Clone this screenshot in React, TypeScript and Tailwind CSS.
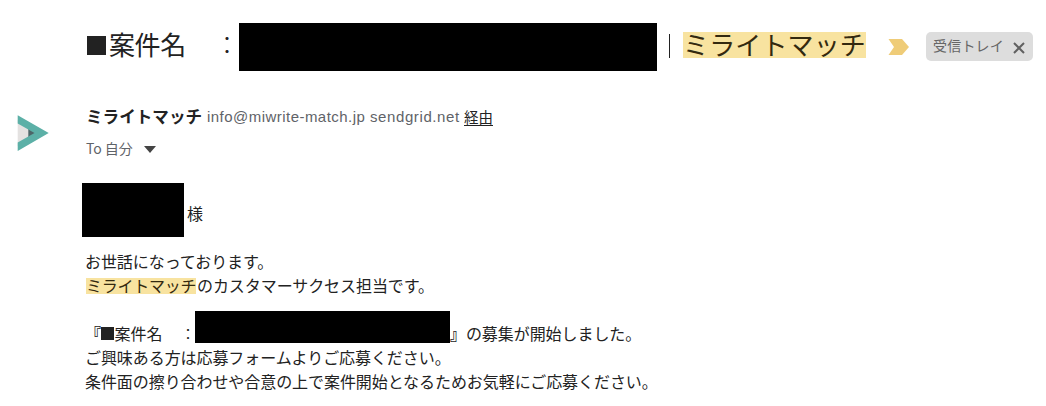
import type { ReactNode } from 'react';

const Mark = ({ children, className = '' }: { children: ReactNode; className?: string }) => (
  <span className={`bg-[#f8e3a0] text-[#33290f] ${className}`}>{children}</span>
);

const SenderLogo = () => (
  <svg width="32" height="38" viewBox="0 0 32 38" className="shrink-0">
    <path d="M.7 6 14 14v10L.7 32z" fill="#e4e2e1" />
    <path d="M11.3 13v12l8-6z" fill="#4d6668" />
    <path d="M.7 1.3 31.7 19 .7 37V28.5L17.5 19 .7 9.5z" fill="#5cb0a7" />
  </svg>
);

const ImportantMarker = () => (
  <svg width="21" height="16" viewBox="0 0 21 16" className="-mt-[2px] ml-[22px] shrink-0">
    <path d="M.5 0H14L21 8l-7 8H.5L6 8z" fill="#efcc78" />
  </svg>
);

const InboxLabel = () => (
  <div className="-mt-[3px] ml-[17px] flex h-[29px] w-[107px] shrink-0 items-center rounded-[5px] bg-[#dddddd] pl-[7px] text-[#666666]">
    <span className="w-[73px] pb-[3px] text-[14px] leading-5 tracking-[0.2px]">受信トレイ</span>
    <svg width="12" height="12" viewBox="0 0 12 12" className="ml-[7px] mt-[3px]">
      <path d="M1 1l10 10M11 1L1 11" stroke="#606060" strokeWidth="2" />
    </svg>
  </div>
);

const Subject = () => (
  <div className="flex h-[49px] items-center pl-[85px] text-[26px] leading-[26px] text-[#222222]">
    <div className="flex w-[154px] shrink-0 items-center">
      <span className="-mt-[4px] ml-[2px] mr-[3px] size-[19px] shrink-0 bg-[#222222]" />
      <span className="-mt-[8px] w-[106px] tracking-[-0.4px]">案件名</span>
      <span className="-mt-[8px] text-[24px] font-light">：</span>
    </div>
    <div className="-mt-px h-[48px] w-[418px] shrink-0 bg-black" />
    <div className="-mt-[4px] ml-3 mr-[13px] h-6 w-px shrink-0 bg-[#222222]" />
    <Mark className="-mt-[5px] block h-[26px] w-[183px] shrink-0 leading-[23px] tracking-[0.14px]">ミライトマッチ</Mark>
    <ImportantMarker />
    <InboxLabel />
  </div>
);

const Sender = () => (
  <div className="mt-[33px] flex h-[56px] pl-[17px]">
    <div className="w-[69px] shrink-0 pt-[9px]">
      <SenderLogo />
    </div>
    <div className="whitespace-nowrap text-[#5f6368]">
      <div className="flex h-6 items-center text-[15px]">
        <span className="-mt-px w-[121px] text-[16.6px] font-bold text-[#222222]">ミライトマッチ</span>
        <span className="w-[163px] font-['Liberation_Sans'] tracking-[0.46px]">info@miwrite-match.jp</span>
        <span className="w-[94px] font-['Liberation_Sans'] tracking-[0.6px]">sendgrid.net</span>
        <span className="-mt-px border-b border-[#222222] text-[14.5px] leading-[17px] text-[#222222]">経由</span>
      </div>
      <div className="mt-[7px] flex h-6 items-center text-[14px]">
        <span className="mr-[3px]">To</span>
        <span>自分</span>
        <svg width="12" height="7" viewBox="0 0 12 7" className="ml-[11px] mt-[2px]">
          <path d="M0 0h12L6 7z" fill="#444444" />
        </svg>
      </div>
    </div>
  </div>
);

const Body = () => (
  <div className="mt-[22px] pl-[85px] text-[16px] leading-6 tracking-[-0.07px] text-[#222222]">
    <div className="-ml-[3px] flex h-[54px]">
      <div className="h-[54px] w-[102px] bg-black" />
      <span className="ml-[3px] mt-[18px]">様</span>
    </div>
    <p className="mt-[12px]">お世話になっております。</p>
    <p className="flex h-6 items-center">
      <Mark className="ml-px mt-[2px] block h-4 w-[110px] leading-[14px] tracking-[-0.25px]">ミライトマッチ</Mark>
      <span className="ml-px">のカスタマーサクセス担当です。</span>
    </p>
    <div className="mt-[14px] flex h-[34px] items-start">
      <span className="mt-[10px] flex w-[110px] shrink-0 items-center">
        <span className="w-[17px] font-bold">『</span>
        <span className="mr-px size-[13px] bg-[#222222]" />
        <span className="w-[70px]">案件名</span>
        <span className="text-[14px]">：</span>
      </span>
      <div className="h-[32px] w-[255px] shrink-0 bg-black" />
      <span className="mt-[10px]">
        <span className="font-bold">』</span>の募集が開始しました。
      </span>
    </div>
    <p>ご興味ある方は応募フォームよりご応募ください。</p>
    <p>条件面の擦り合わせや合意の上で案件開始となるためお気軽にご応募ください。</p>
  </div>
);

const App = () => {
  return (
    <div
      lang="ja"
      className="h-[406px] w-[1046px] overflow-hidden whitespace-nowrap bg-white pt-[23px] font-['Noto_Sans_CJK_JP',sans-serif] antialiased"
    >
      <Subject />
      <Sender />
      <Body />
    </div>
  );
};

export default App;
